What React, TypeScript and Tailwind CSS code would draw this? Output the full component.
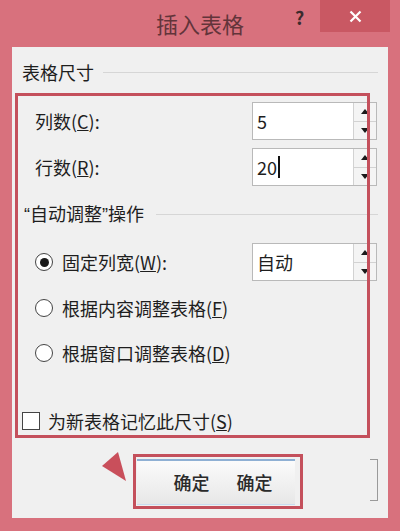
import React from 'react';

const FONT = { fontFamily: '"Noto Sans CJK SC", "Noto Sans", sans-serif' };

function SpinInput({ value, caret }: { value: string; caret?: boolean }) {
  return (
    <div className="flex h-[38px] w-[125px] border border-[#b9b9b9] bg-white">
      <div className="flex flex-1 items-center pl-[4px] text-[18px] text-[#1e1e1e]">
        {value}
        {caret && <span className="ml-[1px] inline-block h-[22px] w-[2px] bg-[#111]" />}
      </div>
      <div className="flex w-[23px] flex-col border-l border-[#d2d2d2] bg-[#f4f4f4]">
        <div className="flex flex-1 items-center justify-center border-b border-[#d2d2d2]">
          <svg width="8" height="5" viewBox="0 0 8 5"><polygon points="4,0 8,5 0,5" fill="#1a1a1a" /></svg>
        </div>
        <div className="flex flex-1 items-center justify-center">
          <svg width="8" height="5" viewBox="0 0 8 5"><polygon points="0,0 8,0 4,5" fill="#1a1a1a" /></svg>
        </div>
      </div>
    </div>
  );
}

function Radio({ checked, label, hotkey }: { checked?: boolean; label: string; hotkey: string }) {
  return (
    <div className="flex items-center gap-[9px]">
      <div className="flex h-[18px] w-[18px] items-center justify-center rounded-full border border-[#444] bg-white">
        {checked && <div className="h-[9px] w-[9px] rounded-full bg-[#1a1a1a]" />}
      </div>
      <span className="text-[18px] text-[#1e1e1e]">
        {label}(<span className="underline">{hotkey}</span>)
      </span>
    </div>
  );
}

const QUOTE = { fontFamily: '"Liberation Sans", sans-serif' };

export default function App() {
  return (
    <div className="flex h-[531px] w-[400px] flex-col bg-[#d8717d]" style={FONT}>
      {/* Title bar */}
      <div className="relative flex h-[47px] items-center justify-center">
        <span className="text-[22px] text-[#62343a]">插入表格</span>
        <span className="absolute left-[295px] top-[4px] text-[18px] font-bold text-[#3b2b2d]">?</span>
        <div className="absolute left-[320px] top-0 flex h-[32px] w-[70px] items-center justify-center bg-[#c95863]">
          <svg width="13" height="13" viewBox="0 0 13 13">
            <path d="M1.5 1.5 L11.5 11.5 M11.5 1.5 L1.5 11.5" stroke="#fff" strokeWidth="2.2" />
          </svg>
        </div>
      </div>

      {/* Dialog body */}
      <div className="relative mx-[12px] mb-[13px] flex flex-1 flex-col bg-[#f0f0f0] pt-[13px] text-[#1e1e1e]">
        {/* Section: 表格尺寸 */}
        <div className="flex h-[24px] items-center pl-[10px] pr-[10px]">
          <span className="text-[18px]">表格尺寸</span>
          <div className="ml-[9px] h-px flex-1 bg-[#d6d6d6]" />
        </div>

        <div className="mt-[18px] flex items-center pl-[23px] pr-[11px]">
          <span className="text-[18px]">列数(<span className="underline">C</span>):</span>
          <div className="ml-auto">
            <SpinInput value="5" />
          </div>
        </div>
        <div className="mt-[8px] flex items-center pl-[23px] pr-[11px]">
          <span className="text-[18px]">行数(<span className="underline">R</span>):</span>
          <div className="ml-auto">
            <SpinInput value="20" caret />
          </div>
        </div>

        {/* Section: 自动调整 */}
        <div className="mt-[16px] flex h-[24px] items-center pl-[12px] pr-[10px]">
          <span className="text-[18px]">
            <span style={QUOTE}>“</span>自动调整<span style={QUOTE}>”</span>操作
          </span>
          <div className="ml-[12px] h-px flex-1 bg-[#d6d6d6]" />
        </div>

        <div className="mt-[17px] flex items-center pl-[23px] pr-[11px]">
          <Radio checked label="固定列宽" hotkey="W" />
          <span className="text-[18px]">:</span>
          <div className="ml-auto">
            <SpinInput value="自动" />
          </div>
        </div>
        <div className="mt-[15px] flex h-[24px] items-center pl-[23px]">
          <Radio label="根据内容调整表格" hotkey="F" />
        </div>
        <div className="mt-[21px] flex h-[24px] items-center pl-[23px]">
          <Radio label="根据窗口调整表格" hotkey="D" />
        </div>

        <div className="mt-[44px] flex h-[24px] items-center gap-[8px] pl-[10px]">
          <div className="h-[18px] w-[18px] border border-[#444] bg-white" />
          <span className="text-[18px]">为新表格记忆此尺寸(<span className="underline">S</span>)</span>
        </div>

        {/* Buttons */}
        <div className="mt-[21px] flex items-start pr-[10px]">
          <svg className="ml-[89px] mt-[-4px]" width="26" height="32" viewBox="0 0 26 32">
            <polygon points="1,16 17,2 25,31" fill="#c94f5b" />
          </svg>
          <div className="ml-[6px] flex h-[55px] w-[170px] border-[3px] border-[#c4505c] bg-[#f0f0f0] pb-[1px] pl-[1px] pr-[5px] pt-[2px]">
            <div className="flex flex-1 items-center justify-center gap-[27px] border-b border-t-2 border-b-[#c9dcef] border-t-[#8fb0d4] bg-gradient-to-b from-[#fbfbfb] to-[#e7e7e7] pl-[14px] text-[18px] font-medium text-[#2a2a2a]">
              <span>确定</span>
              <span>确定</span>
            </div>
          </div>
          <div className="ml-auto mt-[5px] h-[42px] w-[8px] border-y border-r border-[#9a9a9a]" />
        </div>

        {/* Annotation frame */}
        <div className="pointer-events-none absolute left-[3px] top-[46px] h-[345px] w-[355px] border-[3px] border-[#c4505c]" />
      </div>
    </div>
  );
}
